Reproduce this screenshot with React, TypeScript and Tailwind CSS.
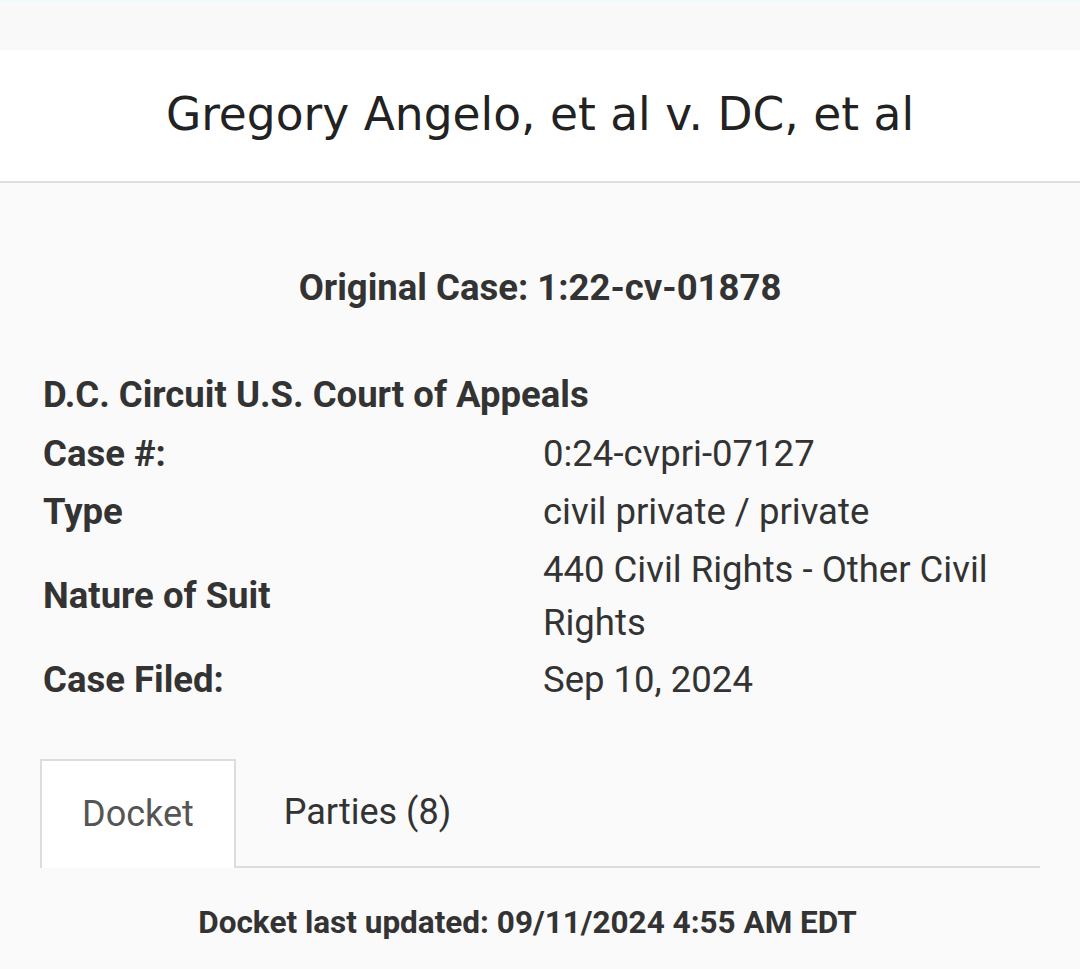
const rows: { label: string; value: string; leading: string }[] = [
  { label: 'Case #:', value: '0:24-cvpri-07127', leading: 'leading-[54px]' },
  { label: 'Type', value: 'civil private / private', leading: 'leading-[54px]' },
  { label: 'Nature of Suit', value: '440 Civil Rights - Other Civil Rights', leading: 'leading-[53px]' },
  { label: 'Case Filed:', value: 'Sep 10, 2024', leading: 'leading-[54px]' },
];

export default function App() {
  return (
    <div className="min-h-screen bg-[#fafafa] font-['Roboto',sans-serif] text-[#333]">
      <div className="h-[50px] border-t-2 border-[#f0fafc] bg-[#f9f9f9]" />

      <header className="flex h-[133px] items-center justify-center border-b-2 border-[#dddddd] bg-white">
        <h1 className="font-['DejaVu_Sans',sans-serif] text-[45.5px] text-[#222]">
          Gregory Angelo, et al v. DC, et al
        </h1>
      </header>

      <main className="px-[40px]">
        <p className="mt-[83px] text-center text-[36.5px] leading-[44px] font-bold">
          Original Case: 1:22-cv-01878
        </p>

        <h2 className="mt-[57px] mb-[2px] px-[3px] text-[36.5px] leading-[56px] font-bold">
          D.C. Circuit U.S. Court of Appeals
        </h2>

        <div className="grid grid-cols-2">
          {rows.map((r) => (
            <div key={r.label} className="contents">
              <div className="flex items-center px-[3px] py-[2px] text-[36.5px] leading-[54px] font-bold">
                {r.label}
              </div>
              <div className={`px-[3px] py-[2px] text-[36.5px] ${r.leading}`}>{r.value}</div>
            </div>
          ))}
        </div>

        <div className="mt-[50px] flex border-b-2 border-[#dddddd]">
          <div className="-mb-[2px] border-2 border-b-0 border-[#dddddd] bg-white px-[40px] pt-[31px] pb-[32px] text-[36px] leading-[44px] text-[#555]">
            Docket
          </div>
          <div className="px-[48px] pt-[31px] pb-[30px] text-[36px] leading-[44px] text-[#333]">Parties (8)</div>
        </div>

        <p className="mt-[35px] pr-[25px] text-center text-[31.5px] leading-[40px] font-bold">
          Docket last updated: 09/11/2024 4:55 AM EDT
        </p>
      </main>
    </div>
  );
}
